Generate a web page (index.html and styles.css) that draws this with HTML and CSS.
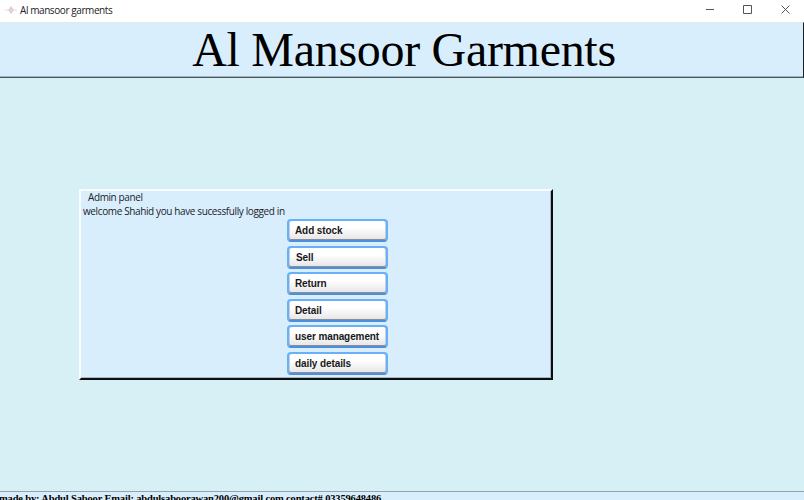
FILE: index.html
```html
<!DOCTYPE html>
<html lang="en">
<head>
<meta charset="utf-8">
<title>Al mansoor garments</title>
<link rel="stylesheet" href="styles.css">
</head>
<body>
<div class="window">
  <div class="titlebar">
    <svg class="app-icon" width="12" height="10" viewBox="0 0 12 10"><path d="M0 5h12" stroke="#e4d6e0"/><path d="M6 1l2.600 4L6 9 3.400 5z" fill="#dfc3d5"/><circle cx="6" cy="5" r="1" fill="#eee2ea"/></svg>
    <span class="caption">Al mansoor garments</span>
    <svg class="controls" width="86" height="12" viewBox="0 0 86 12" fill="none" stroke="#555"><path d="M1 5.500h8M38.500 1.500h8v8h-8zM76.500 1.500l8 8M84.500 1.500l-8 8"/></svg>
  </div>
  <header class="banner"><h1>Al Mansoor Garments</h1></header>
  <main class="content">
    <section class="panel">
      <p class="panel-title">Admin panel</p>
      <p class="welcome">welcome Shahid you have sucessfully logged in</p>
      <div class="buttons">
        <button>Add stock</button>
        <button class="w-sell">Sell</button>
        <button>Return</button>
        <button>Detail</button>
        <button>user management</button>
        <button>daily details</button>
      </div>
    </section>
  </main>
  <footer class="footer">made by: Abdul Saboor Email: abdulsaboorawan200@gmail.com contact# 03359648486</footer>
</div>
</body>
</html>
```
FILE: styles.css
```css
* { box-sizing: border-box; }
body { margin: 0; overflow: hidden; }
p, h1 { margin: 0; }
.window {
  width: 804px;
  height: 500px;
  display: flex;
  flex-direction: column;
  overflow: hidden;
  background: #d7f0f5;
}
.titlebar {
  height: 22px;
  flex: none;
  display: flex;
  align-items: center;
  padding: 0 13px 2px 5px;
  background: #fff;
  font: 10px/18px "Open Sans", sans-serif;
  color: #222;
}
.caption { margin-left: 3px; letter-spacing: -0.42px; }
.controls { margin-left: auto; }
.banner {
  height: 56px;
  flex: none;
  border-top: 1px solid #e3e8eb;
  border-right: 1px solid #1c1f22;
  border-bottom: 1px solid #48575c;
  box-shadow: inset 0 -1px 0 #a3b4bc;
  background: #d9eefd;
  text-align: center;
}
.banner h1 {
  padding-left: 5px;
  font: 400 48px/54px "Liberation Serif", serif;
  letter-spacing: -0.3px;
  color: #000;
}
.content {
  flex: 1;
  padding: 111px 0 0 79px;
}
.panel {
  width: 474px;
  height: 191px;
  padding: 0 2px;
  border: 2px solid #f8fcfe;
  border-right-color: #0c0e10;
  border-bottom-color: #0c0e10;
  background: #d9eefd;
  box-shadow: inset -1px -1px 0 #a9bac6;
  font: 10px/14px "Open Sans", sans-serif;
  color: #1c2126;
}
.panel-title { padding-left: 5px; margin-top: -1px; letter-spacing: -0.4px; }
.welcome { letter-spacing: -0.38px; white-space: nowrap; }
.buttons {
  display: grid;
  gap: 3.6px;
  width: 101px;
  margin: 1px 0 0 204px;
}
button {
  height: 23px;
  padding: 1px 0 0 6px;
  border: 2px solid #68b0f8;
  border-bottom-color: #4d8fdc;
  border-radius: 4px;
  background: linear-gradient(#fff 35%, #e5e5e7);
  box-shadow: inset 0 -1px 0 #8b8e94, inset 1px 0 0 #c7d0da, inset -1px 0 0 #c7d0da;
  font: bold 10px/18px "Liberation Sans", sans-serif;
  letter-spacing: -0.1px;
  text-align: left;
  white-space: nowrap;
  color: #181818;
}
.w-sell { padding-left: 7px; }
.footer {
  height: 9px;
  flex: none;
  overflow: hidden;
  border-top: 1px solid #93a3ad;
  background: #d9eefd;
  font: bold 10.5px/13px "Liberation Serif", serif;
  letter-spacing: -0.16px;
  text-indent: -1px;
  white-space: nowrap;
  color: #000;
}
```
